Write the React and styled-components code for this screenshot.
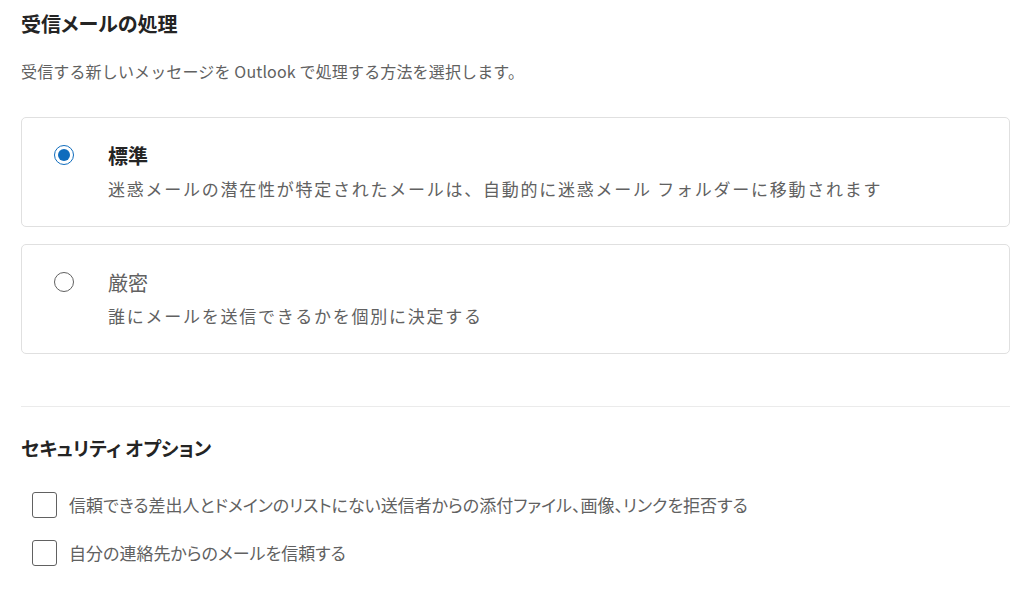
import React, { useState } from 'react'
import styled, { createGlobalStyle } from 'styled-components'

const GlobalStyle = createGlobalStyle`
  body {
    margin: 0;
    background: #ffffff;
    font-family: "Noto Sans CJK JP", "Noto Sans", sans-serif;
    color: #242424;
  }
`

const options = [
  { id: 'standard', title: '標準', desc: '迷惑メールの潜在性が特定されたメールは、自動的に迷惑メール フォルダーに移動されます' },
  { id: 'strict', title: '厳密', desc: '誰にメールを送信できるかを個別に決定する' }
]

const checks = [
  '信頼できる差出人とドメインのリストにない送信者からの添付ファイル、画像、リンクを拒否する',
  '自分の連絡先からのメールを信頼する'
]

export default function App(){
  let [mode, setMode] = useState('standard')
  let [checked, setChecked] = useState([false, false])

  function toggle(i){
    setChecked(checked.map((c, j) => j === i ? !c : c))
  }

  return(
    <Page>
      <GlobalStyle />
      <Heading>受信メールの処理</Heading>
      <Lead>受信する新しいメッセージを Outlook で処理する方法を選択します。</Lead>

      <CardList>
        {options.map(o =>
          <Card key={o.id} onClick={() => setMode(o.id)}>
            <Radio selected={mode === o.id} />
            <CardText>
              <CardTitle selected={mode === o.id}>{o.title}</CardTitle>
              <CardDesc>{o.desc}</CardDesc>
            </CardText>
          </Card>
        )}
      </CardList>

      <Divider />

      <SubHeading>セキュリティ オプション</SubHeading>
      <CheckList>
        {checks.map((c, i) =>
          <CheckRow key={i} onClick={() => toggle(i)}>
            <Box checked={checked[i]} />
            <span>{c}</span>
          </CheckRow>
        )}
      </CheckList>
    </Page>
  )
}

const Page = styled.div`
  padding: 10px 14px 0 21px;
`

const Heading = styled.h1`
  margin: 0;
  font-size: 20px;
  line-height: 28px;
  font-weight: 700;
  font-feature-settings: "palt";
  color: #242424;
`

const Lead = styled.p`
  margin: 22px 0 0 0;
  font-size: 16px;
  line-height: 22px;
  letter-spacing: 0.15px;
  color: #616161;
`

const CardList = styled.div`
  display: flex;
  flex-direction: column;
  gap: 17px;
  margin-top: 35px;
`

const Card = styled.div`
  display: flex;
  align-items: flex-start;
  gap: 34px;
  height: 110px;
  box-sizing: border-box;
  padding: 26px 32px 0 32px;
  border: 1px solid #e0e0e0;
  border-radius: 5px;
  cursor: pointer;
`

const Radio = styled.span`
  flex: none;
  width: 20px;
  height: 20px;
  margin-top: 1px;
  box-sizing: border-box;
  border-radius: 50%;
  border: 1px solid ${p => p.selected ? '#0f6cbd' : '#616161'};
  display: flex;
  align-items: center;
  justify-content: center;

  &::after {
    content: '';
    display: ${p => p.selected ? 'block' : 'none'};
    width: 12px;
    height: 12px;
    border-radius: 50%;
    background: #0f6cbd;
  }
`

const CardText = styled.div`
  display: flex;
  flex-direction: column;
  gap: 8px;
`

const CardTitle = styled.div`
  font-size: 20px;
  line-height: 24px;
  font-weight: ${p => p.selected ? 700 : 400};
  color: ${p => p.selected ? '#242424' : '#616161'};
`

const CardDesc = styled.div`
  font-size: 17px;
  line-height: 26px;
  letter-spacing: 1.75px;
  color: #616161;
`

const Divider = styled.hr`
  margin: 52px 0 0 0;
  border: none;
  border-top: 1px solid #ebebeb;
`

const SubHeading = styled.h2`
  margin: 28px 0 0 0;
  font-size: 19px;
  line-height: 26px;
  font-weight: 700;
  font-feature-settings: "palt";
  color: #242424;
`

const CheckList = styled.div`
  display: flex;
  flex-direction: column;
  gap: 22px;
  margin-top: 31px;
  padding-left: 11px;
`

const CheckRow = styled.label`
  display: flex;
  align-items: center;
  gap: 12px;
  font-size: 17px;
  line-height: 26px;
  font-feature-settings: "palt";
  color: #616161;
  cursor: pointer;
`

const Box = styled.span`
  flex: none;
  width: 25px;
  height: 26px;
  box-sizing: border-box;
  border: 1px solid #616161;
  border-radius: 3px;
  background: ${p => p.checked ? '#0f6cbd' : '#ffffff'};
`
